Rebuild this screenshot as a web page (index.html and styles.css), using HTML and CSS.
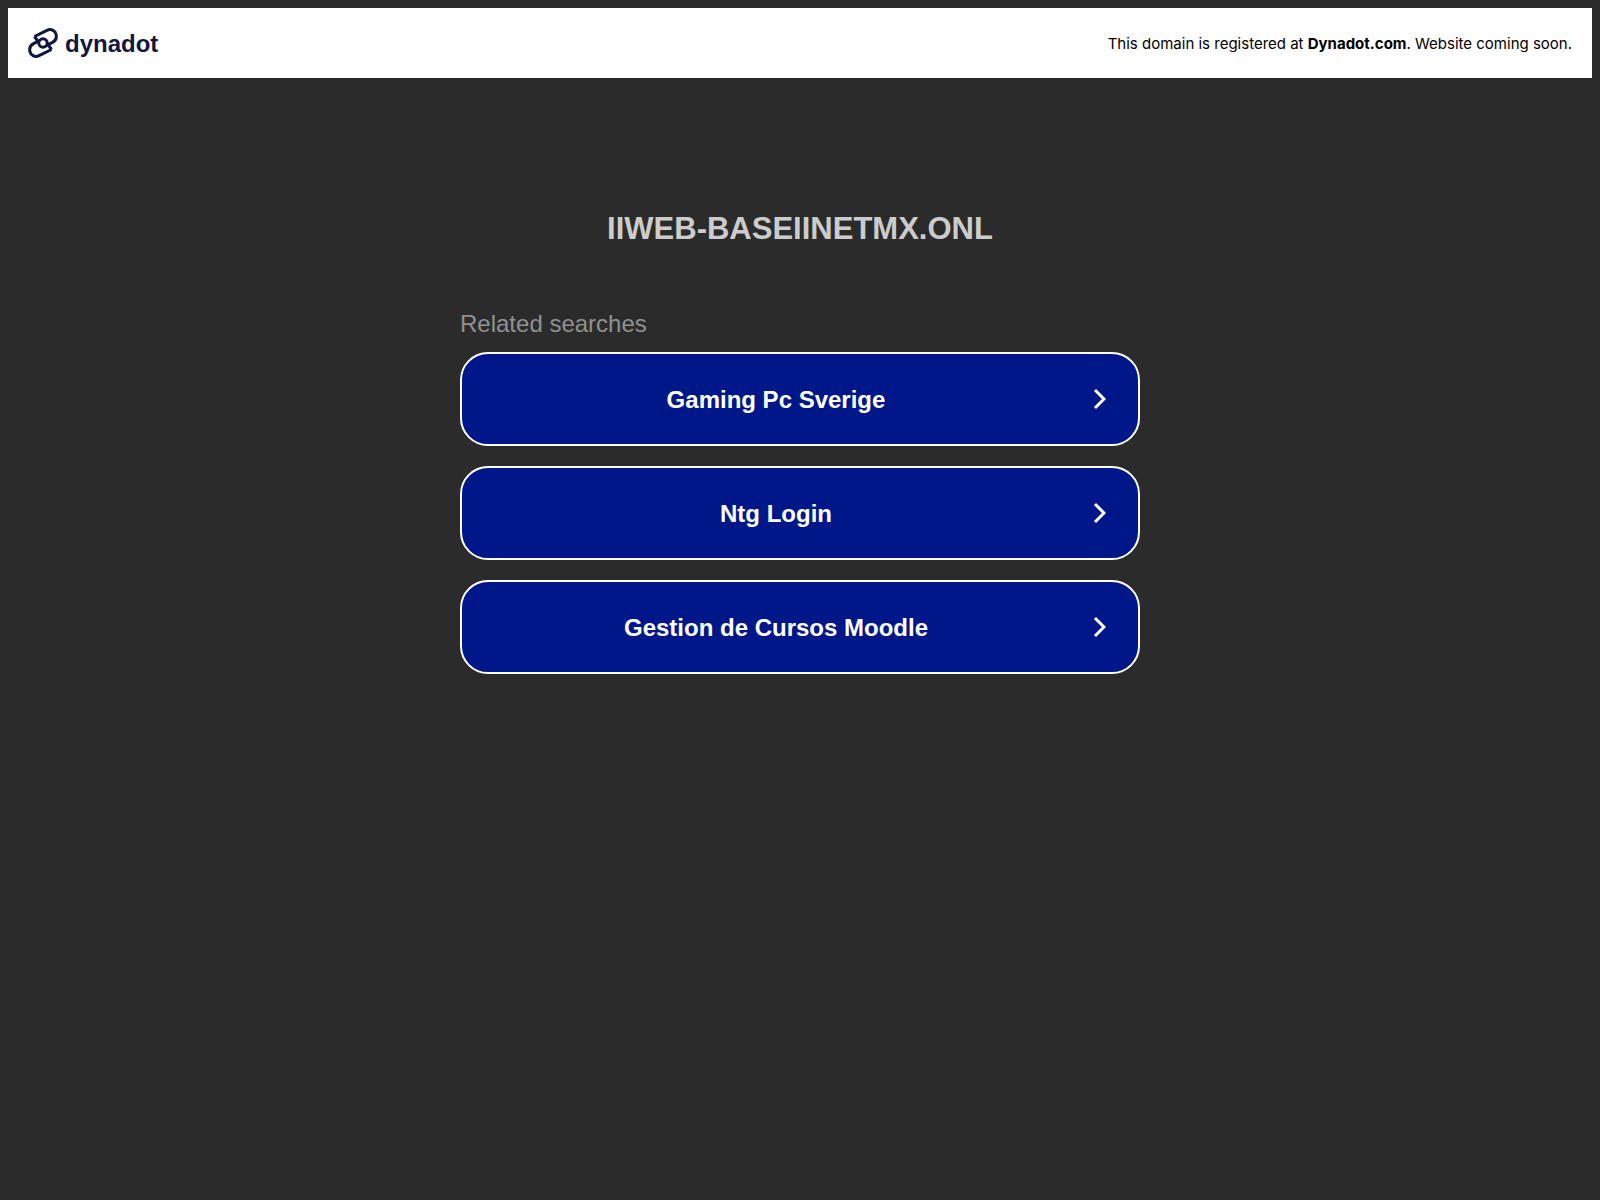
FILE: index.html
```html
<!DOCTYPE html>
<html lang="en">
<head>
<meta charset="utf-8">
<title>iiweb-baseiinetmx.onl</title>
<meta name="viewport" content="width=device-width, initial-scale=1">
<link rel="stylesheet" href="styles.css">
</head>
<body>
<header class="banner">
  <a class="brand" href="#">
    <svg class="brand-mark" viewBox="0 0 30 30" aria-hidden="true">
      <path d="M6.500 8.500 19 2.300C23 .3 27 2.600 28 6.200c1 3.800-.5 6.600-3.500 8.200L18.700 17.300M6.500 8.500l4.200 5.800"/>
      <path d="M23.500 21.500 11 27.700C7 29.700 3 27.400 2 23.800c-1-3.800.5-6.600 3.500-8.200L11.300 12.700M23.500 21.500l-4.200-5.800"/>
      <circle cx="15" cy="15" r="4.200"/>
    </svg>
    <span>dynadot</span>
  </a>
  <p class="notice">This domain is registered at <a class="registrar" href="#">Dynadot.com</a>. Website coming soon.</p>
</header>
<main class="content">
  <h1 class="domain">iiweb-baseiinetmx.onl</h1>
  <nav class="searches" aria-labelledby="related">
    <h2 class="searches-title" id="related">Related searches</h2>
    <a class="search" href="#"><span class="search-label">Gaming Pc Sverige</span><svg class="chevron" viewBox="0 0 14 22" aria-hidden="true"><path d="M3 2l9 9-9 9"/></svg></a>
    <a class="search" href="#"><span class="search-label">Ntg Login</span><svg class="chevron" viewBox="0 0 14 22" aria-hidden="true"><path d="M3 2l9 9-9 9"/></svg></a>
    <a class="search" href="#"><span class="search-label">Gestion de Cursos Moodle</span><svg class="chevron" viewBox="0 0 14 22" aria-hidden="true"><path d="M3 2l9 9-9 9"/></svg></a>
  </nav>
</main>
</body>
</html>
```
FILE: styles.css
```css
* {
  box-sizing: border-box;
}

body {
  margin: 8px;
  background: #2b2b2b;
  font-family: "Liberation Sans", Arial, sans-serif;
}

.banner {
  display: flex;
  align-items: center;
  justify-content: space-between;
  padding: 19px 20px;
  background: #fff;
}

.brand {
  display: flex;
  align-items: center;
  gap: 7px;
  color: #11163f;
  font-size: 24px;
  font-weight: 700;
  line-height: 30px;
  text-decoration: none;
}

.brand span {
  padding-top: 2px;
}

.brand-mark {
  width: 30px;
  height: 30px;
  fill: none;
  stroke: currentColor;
  stroke-width: 3;
}

.notice {
  margin: 0;
  padding-top: 2px;
  color: #000;
  font-family: Inter, sans-serif;
  font-size: 15px;
  line-height: 30px;
}

.registrar {
  color: inherit;
  font-weight: 700;
  text-decoration: none;
}

.content {
  display: flex;
  flex-direction: column;
  align-items: center;
  padding-top: 132px;
}

.domain {
  margin: 0;
  color: #ccc;
  font-size: 31px;
  line-height: 38px;
  text-transform: uppercase;
}

.searches {
  display: flex;
  flex-direction: column;
  gap: 20px;
  width: 100%;
  max-width: 680px;
  padding-top: 62px;
}

.searches-title {
  margin: 0 0 -6px;
  color: #919191;
  font-size: 24px;
  font-weight: 400;
  line-height: 28px;
}

.search {
  display: flex;
  align-items: center;
  padding: 29px 32px;
  border: 2px solid #fff;
  border-radius: 28px;
  background: #001789;
  color: #fff;
  font-size: 24px;
  font-weight: 700;
  line-height: 30px;
  text-decoration: none;
}

.search-label {
  flex: 1;
  padding: 2px 34px 0 0;
  text-align: center;
}

.chevron {
  width: 14px;
  height: 22px;
  fill: none;
  stroke: currentColor;
  stroke-width: 3;
}
```
